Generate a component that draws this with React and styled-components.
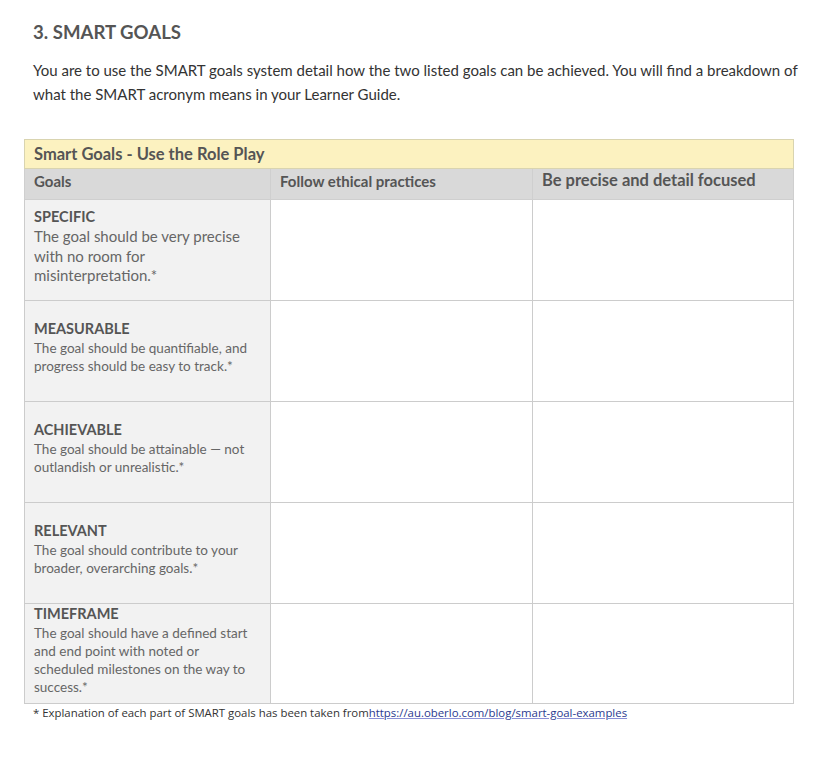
import React from "react"
import styled, { createGlobalStyle } from "styled-components"

const GlobalStyle = createGlobalStyle`
  body {
    margin: 0;
    background: #fff;
    font-family: Lato, "Open Sans", sans-serif;
    color: #333;
  }
`

const Page = styled.div`
  padding: 21px 28px 40px 24px;
`

const Title = styled.h2`
  margin: 0 0 0 9px;
  font-size: 18.6px;
  font-weight: 700;
  color: #555;
  line-height: 22px;
`

const Intro = styled.p`
  margin: 15px 0 0 9px;
  font-size: 15px;
  line-height: 24px;
  color: #333;
`

const Table = styled.table`
  margin-top: 33px;
  width: 769px;
  border-collapse: collapse;
  table-layout: fixed;
  color: #555;
`

const Caption = styled.th`
  background: #fcf2c0;
  border: 1px solid #d9d4b0;
  text-align: left;
  padding: 3px 9px 4px;
  height: 21px;
  font-size: 16.5px;
  font-weight: 700;
  color: #555;
`

const HeadCell = styled.th`
  background: #d9d9d9;
  border: 1px solid #cfcfcf;
  text-align: left;
  vertical-align: top;
  padding: ${(p) => (p.$big ? "1px 9px 7px" : "3px 9px 5px")};
  height: 22px;
  font-size: ${(p) => (p.$big ? "16.5px" : "15px")};
  font-weight: 700;
  color: #555;
`

const GoalCell = styled.td`
  background: #f2f2f2;
  border: 1px solid #ccc;
  vertical-align: top;
  height: ${(p) => p.$height}px;
  padding: ${(p) => p.$top}px 10px 0 9px;
  box-sizing: border-box;
`

const BlankCell = styled.td`
  border: 1px solid #ccc;
  background: #fff;
`

const Label = styled.div`
  font-size: 14.5px;
  font-weight: 700;
  line-height: 20px;
  color: #555;
`

const Desc = styled.div`
  font-size: ${(p) => (p.$large ? "15px" : "13.5px")};
  line-height: ${(p) => (p.$large ? "19.5px" : "18px")};
  color: #666;
`

const Note = styled.div`
  margin: 1px 0 0 9px;
  font-size: 11.4px;
  color: #333;
  font-family: "Open Sans", Lato, sans-serif;
`

const Link = styled.a`
  color: #2b3a8f;
  text-decoration: underline;
  text-decoration-color: #8a8fd6;
`

const goals = [
  {
    label: "SPECIFIC",
    desc: "The goal should be very precise with no room for misinterpretation.*",
    top: 7,
    large: true,
  },
  {
    label: "MEASURABLE",
    desc: "The goal should be quantifiable, and progress should be easy to track.*",
    top: 18,
  },
  {
    label: "ACHIEVABLE",
    desc: "The goal should be attainable — not outlandish or unrealistic.*",
    top: 18,
  },
  {
    label: "RELEVANT",
    desc: "The goal should contribute to your broader, overarching goals.*",
    top: 18,
  },
  {
    label: "TIMEFRAME",
    desc: "The goal should have a defined start and end point with noted or scheduled milestones on the way to success.*",
    top: 0,
  },
]

export default function App() {
  return (
    <Page>
      <GlobalStyle />
      <Title>3. SMART GOALS</Title>
      <Intro>
        You are to use the SMART goals system detail how the two listed goals
        can be achieved. You will find a breakdown of what the SMART acronym
        means in your Learner Guide.
      </Intro>
      <Table>
        <colgroup>
          <col style={{ width: 246 }} />
          <col style={{ width: 262 }} />
          <col style={{ width: 261 }} />
        </colgroup>
        <thead>
          <tr>
            <Caption colSpan={3}>Smart Goals - Use the Role Play</Caption>
          </tr>
          <tr>
            <HeadCell>Goals</HeadCell>
            <HeadCell>Follow ethical practices</HeadCell>
            <HeadCell $big>Be precise and detail focused</HeadCell>
          </tr>
        </thead>
        <tbody>
          {goals.map((g, i) => (
            <tr key={g.label}>
              <GoalCell $top={g.top} $height={i === 4 ? 100 : 101}>
                <Label>{g.label}</Label>
                <Desc $large={g.large}>{g.desc}</Desc>
              </GoalCell>
              <BlankCell />
              <BlankCell />
            </tr>
          ))}
        </tbody>
      </Table>
      <Note>
        * Explanation of each part of SMART goals has been taken from
        <Link href="#">https://au.oberlo.com/blog/smart-goal-examples</Link>
      </Note>
    </Page>
  )
}
